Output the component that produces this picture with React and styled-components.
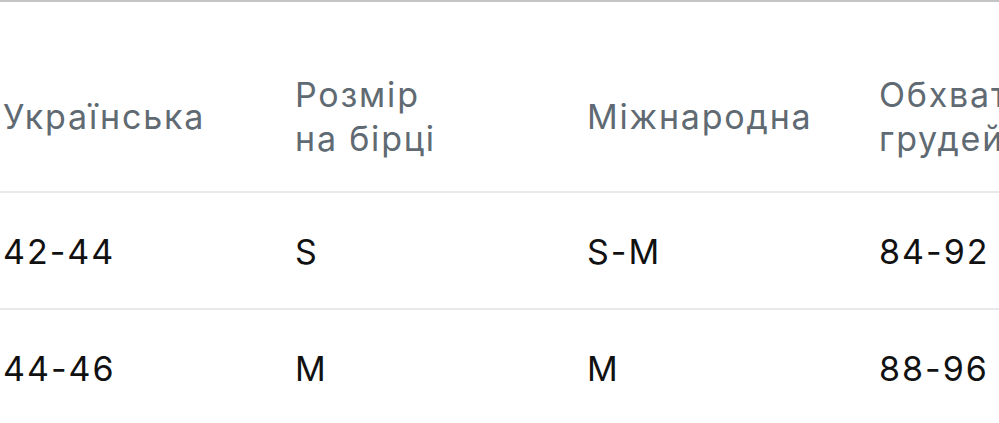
import React from "react";
import styled, { createGlobalStyle } from "styled-components";

const GlobalStyle = createGlobalStyle`
  html, body {
    margin: 0;
    padding: 0;
    background: #fff;
    overflow: hidden;
  }
  body {
    font-family: Inter, "Noto Sans", sans-serif;
  }
`;

const columns = [["Українська"], ["Розмір", "на бірці"], ["Міжнародна"], ["Обхват", "грудей"]];

const rows = [
  ["42-44", "S", "S-M", "84-92"],
  ["44-46", "M", "M", "88-96"],
];

const App = () => {
  return (
    <>
      <GlobalStyle />
      <Wrapper>
        <SizeTable>
          <HeadRow>
            {columns.map((lines) => (
              <HeadCell key={lines.join(" ")}>
                {lines.map((line) => (
                  <div key={line}>{line}</div>
                ))}
              </HeadCell>
            ))}
          </HeadRow>
          {rows.map((row) => (
            <Row key={row[0]}>
              {row.map((value, i) => (
                <Cell key={i}>{value}</Cell>
              ))}
            </Row>
          ))}
        </SizeTable>
      </Wrapper>
    </>
  );
};

const Wrapper = styled.div`
  width: 999px;
  height: 423px;
  border-top: 2px solid #c4c5c7;
  padding-top: 41px;
  box-sizing: border-box;
  overflow: hidden;
`;

const SizeTable = styled.div`
  display: flex;
  flex-direction: column;
  width: 1168px;
`;

const HeadRow = styled.div`
  display: grid;
  grid-template-columns: repeat(4, 292px);
  align-items: center;
  height: 148px;
  border-bottom: 2px solid #e8e9eb;
`;

const Row = styled.div`
  display: grid;
  grid-template-columns: repeat(4, 292px);
  align-items: center;
  height: 115px;
  border-bottom: 2px solid #e8e9eb;
`;

const HeadCell = styled.div`
  padding-left: 3px;
  font-size: 34px;
  line-height: 44px;
  letter-spacing: 1.8px;
  color: #5f6a72;
  white-space: nowrap;
`;

const Cell = styled.div`
  padding-left: 3px;
  padding-top: 3px;
  font-size: 34px;
  line-height: 42px;
  letter-spacing: 2px;
  color: #111;
  white-space: nowrap;
`;

export default App;
